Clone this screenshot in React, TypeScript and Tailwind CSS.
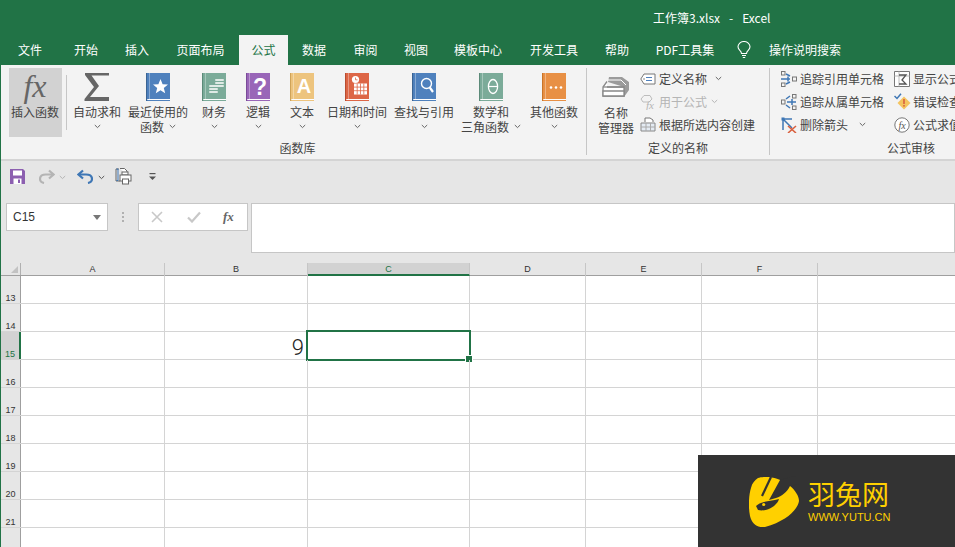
import React from "react";

const Chevron = ({ c = "#666" }: { c?: string }) => (
  <svg width="7" height="5" viewBox="0 0 7 5" className="shrink-0">
    <path d="M0.8 1 L3.5 3.6 L6.2 1" fill="none" stroke={c} strokeWidth="1" />
  </svg>
);

const Book = ({ color, dark, children }: { color: string; dark: string; children?: React.ReactNode }) => (
  <svg width="24" height="28" viewBox="0 0 24 28" className="shrink-0">
    <rect x="0" y="0" width="24" height="26" fill={color} />
    <rect x="1.2" y="26" width="22.8" height="0.9" fill="#fff" />
    <rect x="1" y="27" width="23" height="1" fill={color} />
    <rect x="0" y="0" width="1.2" height="28" fill={dark} />
    <rect x="1.2" y="0" width="2" height="26" fill={color} />
    <rect x="3" y="0" width="0.6" height="26" fill="#fff" opacity="0.55" />
    {children}
  </svg>
);

const icons: Record<string, React.ReactNode> = {
  recent: (
    <Book color="#4f81bd" dark="#3a6392">
      <polygon points="14.5,6 16.6,11.2 22,11.5 17.8,15 19.2,20.3 14.5,17.3 9.8,20.3 11.2,15 7,11.5 12.4,11.2" fill="#fff" />
    </Book>
  ),
  finance: (
    <Book color="#7bab99" dark="#5b8a78">
      <g fill="#dfeae5">
        <rect x="13" y="6" width="9" height="2" rx="1" />
        <rect x="13" y="9" width="9" height="2" rx="1" />
        <rect x="13" y="12" width="9" height="2" rx="1" />
        <rect x="7" y="12" width="9" height="2" rx="1" />
        <rect x="7" y="15" width="9" height="2" rx="1" />
        <rect x="7" y="18" width="9" height="2" rx="1" />
      </g>
    </Book>
  ),
  logic: (
    <Book color="#9966b8" dark="#7a4a98">
      <text x="14" y="22" textAnchor="middle" fontSize="23" fontWeight="700" fill="#fff" fontFamily="Liberation Sans">?</text>
    </Book>
  ),
  text: (
    <Book color="#edc47e" dark="#cfa358">
      <text x="14" y="20" textAnchor="middle" fontSize="20" fontWeight="700" fill="#fff" fontFamily="Liberation Sans">A</text>
    </Book>
  ),
  date: (
    <Book color="#dd6646" dark="#b84c30">
      <circle cx="10.5" cy="6.5" r="3.6" fill="#fff" />
      <path d="M10.5 4.5 V6.8 H12.5" stroke="#dd6646" fill="none" strokeWidth="0.8" />
      <rect x="9" y="10.5" width="13" height="11" fill="#fff" />
      <g stroke="#dd6646" strokeWidth="0.8">
        <path d="M12.2 10.5 V21.5 M15.5 10.5 V21.5 M18.8 10.5 V21.5 M9 14.1 H22 M9 17.7 H22" />
      </g>
    </Book>
  ),
  lookup: (
    <Book color="#4f81bd" dark="#3a6392">
      <circle cx="14.5" cy="10.5" r="5" fill="none" stroke="#fff" strokeWidth="1.4" />
      <path d="M17.8 14.5 L21 19" stroke="#fff" strokeWidth="2.2" />
    </Book>
  ),
  math: (
    <Book color="#7bab99" dark="#5b8a78">
      <ellipse cx="14" cy="13.5" rx="4.6" ry="7" fill="none" stroke="#fff" strokeWidth="1.3" />
      <path d="M9.5 13.5 H18.5" stroke="#fff" strokeWidth="1.2" />
    </Book>
  ),
  other: (
    <Book color="#e89045" dark="#c87428">
      <circle cx="9" cy="14.5" r="1.3" fill="#fff" />
      <circle cx="14" cy="14.5" r="1.3" fill="#fff" />
      <circle cx="19" cy="14.5" r="1.3" fill="#fff" />
    </Book>
  ),
  sigma: (
    <svg width="26" height="28" viewBox="0 0 26 28" className="shrink-0">
      <polygon points="1,0 25,0 25,2.6 7.5,2.6 15,13 6,24 25,24 25,28 0.5,28 0.5,26 10,14 1,2" fill="#666" />
    </svg>
  ),
};

const funcButtons = [
  { cls: "w-[50px] ml-[5px]", icon: "sigma", l1: "自动求和", l2: "" },
  { cls: "w-[62px] ml-[5px]", icon: "recent", l1: "最近使用的", l2: "函数" },
  { cls: "w-[44px] ml-[3px]", icon: "finance", l1: "财务", l2: "" },
  { cls: "w-[44px]", icon: "logic", l1: "逻辑", l2: "" },
  { cls: "w-[44px]", icon: "text", l1: "文本", l2: "" },
  { cls: "w-[62px] ml-[2px]", icon: "date", l1: "日期和时间", l2: "" },
  { cls: "w-[62px] ml-[5px]", icon: "lookup", l1: "查找与引用", l2: "" },
  { cls: "w-[62px] ml-[5px]", icon: "math", l1: "数学和", l2: "三角函数" },
  { cls: "w-[52px] ml-[6px]", icon: "other", l1: "其他函数", l2: "" },
];

const FuncButton = ({ cls, icon, l1, l2 }: { cls: string; icon: string; l1: string; l2: string }) => (
  <div className={`${cls} flex flex-col items-center pt-[5px] shrink-0`}>
    <div className="h-[28px] flex justify-center">{icons[icon]}</div>
    <div className="mt-[3px] leading-[15px] whitespace-nowrap">{l1}</div>
    <div className="leading-[15px] h-[15px] flex items-center gap-[5px] whitespace-nowrap">
      {l2 && <span>{l2}</span>}
      <Chevron />
    </div>
  </div>
);

const Tag = () => (
  <svg width="16" height="12" viewBox="0 0 16 12">
    <path d="M4 1 H15 V11 H4 L0.8 6 Z" fill="#fff" stroke="#777" />
    <path d="M6 4.5 H12 M6 7.5 H12" stroke="#4f81bd" />
    <circle cx="4" cy="6" r="0.8" fill="#777" />
  </svg>
);
const UseIn = () => (
  <svg width="17" height="16" viewBox="0 0 17 16">
    <path d="M1 5 L4 1.5 H10 L12 5 L9 8 H3 Z" fill="none" stroke="#bdbdbd" />
    <text x="6" y="15" fontSize="11" fontStyle="italic" fontFamily="Liberation Serif" fill="#b5b5b5">fx</text>
  </svg>
);
const FromSel = () => (
  <svg width="16" height="15" viewBox="0 0 16 15">
    <path d="M1 6 H15 V14 H1 Z" fill="#e4ebf3" stroke="#888" />
    <path d="M1 10 H15 M6 6 V14 M10.5 6 V14" stroke="#aaa" />
    <path d="M5 5 V1 H10 L13 3 V5" fill="#fff" stroke="#777" />
  </svg>
);
const Manager = () => (
  <svg width="28" height="22" viewBox="0 0 28 22">
    <path d="M7 1 H20 L27 6 V14 L22 21 V11 L6 6 Z" fill="#9b9b9b" />
    <path d="M6 4 H19 L24 9" fill="none" stroke="#fff" strokeWidth="1" />
    <path d="M5 5.5 L1 11 V20 H22 V11 H5" fill="#fff" stroke="#888" strokeWidth="1.3" />
    <path d="M1 11 H22" stroke="#888" strokeWidth="1.3" />
    <path d="M1 15 H22 V20 H1 Z" fill="#fff" stroke="#888" strokeWidth="1.3" />
  </svg>
);
const TraceA = () => (
  <svg width="16" height="16" viewBox="0 0 16 16">
    <rect x="0.5" y="0.5" width="3.5" height="3.5" fill="none" stroke="#777" />
    <rect x="0.5" y="12" width="3.5" height="3.5" fill="none" stroke="#777" />
    <rect x="11.5" y="6" width="4" height="4" fill="none" stroke="#777" />
    <path d="M0 8 H9 M7 5.5 V10.5 M5 3 L9 5 M5 13 L9 11" stroke="#3f77b5" strokeWidth="1.5" />
  </svg>
);
const TraceB = () => (
  <svg width="16" height="16" viewBox="0 0 16 16">
    <rect x="0.5" y="6" width="3.5" height="4" fill="none" stroke="#777" />
    <rect x="11.5" y="0.5" width="3.5" height="3.5" fill="none" stroke="#777" />
    <rect x="11.5" y="12" width="3.5" height="3.5" fill="none" stroke="#777" />
    <path d="M6 8 H15 M11 5 V11 M5 5 L9 2 M5 11 L9 14" stroke="#3f77b5" strokeWidth="1.5" />
  </svg>
);
const RemoveArrows = () => (
  <svg width="16" height="16" viewBox="0 0 16 16">
    <path d="M2 2 V13 M2 2 H11 M2 2 L11 11" stroke="#3f77b5" strokeWidth="1.5" fill="none" />
    <path d="M7 9 L15 16 M15 9 L7 16" stroke="#d9603f" strokeWidth="1.6" />
    <rect x="0.5" y="0.5" width="3" height="3" fill="#3f77b5" />
  </svg>
);
const ShowF = () => (
  <svg width="16" height="16" viewBox="0 0 16 16">
    <path d="M0.5 0.5 H15.5 V15.5 H0.5 Z" fill="#fff" stroke="#777" />
    <path d="M0.5 5 H15.5 M5 0.5 V15.5" stroke="#bbb" />
    <path d="M5 4 H12 L8 9 L12 13 H5" fill="none" stroke="#555" strokeWidth="1.3" />
  </svg>
);
const ErrCheck = () => (
  <svg width="17" height="17" viewBox="0 0 17 17">
    <path d="M0.5 3 L3 5.5 L7 0.8" fill="none" stroke="#3f77b5" strokeWidth="1.5" />
    <polygon points="10,3.5 16.5,10 10,16.5 3.5,10" fill="#f4c45f" />
    <path d="M10 6 V11" stroke="#d9603f" strokeWidth="1.6" />
    <rect x="9.2" y="12" width="1.6" height="1.6" fill="#d9603f" />
  </svg>
);
const EvalF = () => (
  <svg width="16" height="16" viewBox="0 0 16 16">
    <circle cx="8" cy="8" r="7.2" fill="#fff" stroke="#777" />
    <text x="8" y="11.5" textAnchor="middle" fontSize="10" fontStyle="italic" fontFamily="Liberation Serif" fill="#555">fx</text>
  </svg>
);

const Row = ({ children, icon, cls = "" }: { children: React.ReactNode; icon: React.ReactNode; cls?: string }) => (
  <div className={`h-[23px] flex items-center whitespace-nowrap ${cls}`}>
    <div className="w-[19px] flex items-center shrink-0">{icon}</div>
    {children}
  </div>
);

const Group = ({ cls, label, children }: { cls: string; label: string; children: React.ReactNode }) => (
  <div className={`${cls} h-[87px] flex flex-col shrink-0`}>
    <div className="h-[72px] flex">{children}</div>
    <div className="h-[15px] leading-[15px] text-center">{label}</div>
  </div>
);

const tabs = [
  { t: "文件", c: "w-[60px]" },
  { t: "开始", c: "w-[52px]" },
  { t: "插入", c: "w-[50px]" },
  { t: "页面布局", c: "w-[77px]" },
  { t: "公式", c: "w-[49px] bg-[#f3f3f3] text-[#217346]" },
  { t: "数据", c: "w-[52px]" },
  { t: "审阅", c: "w-[51px]" },
  { t: "视图", c: "w-[50px]" },
  { t: "模板中心", c: "w-[74px]" },
  { t: "开发工具", c: "w-[78px]" },
  { t: "帮助", c: "w-[48px]" },
  { t: "PDF工具集", c: "w-[88px]" },
];

const columns = [
  { n: "A", c: "w-[144px]" },
  { n: "B", c: "w-[143px]" },
  { n: "C", c: "w-[162px]" },
  { n: "D", c: "w-[116px]" },
  { n: "E", c: "w-[116px]" },
  { n: "F", c: "w-[116px]" },
];
const rows = [13, 14, 15, 16, 17, 18, 19, 20, 21, 22];

export default function App() {
  return (
    <div className="relative w-[955px] h-[547px] overflow-hidden bg-white text-[12px] text-[#444] [font-family:'Noto_Sans_CJK_SC','Noto_Sans',sans-serif]">
      {/* title */}
      <div className="h-[35px] bg-[#217346] text-white pl-[653px] pt-[9px] leading-[17px] whitespace-nowrap flex">
        <span>工作簿3.xlsx</span>
        <span className="ml-[9px]">-</span>
        <span className="ml-[9px]">Excel</span>
      </div>
      {/* tabs */}
      <div className="h-[30px] bg-[#217346] flex text-white">
        {tabs.map((t) => (
          <div key={t.t} className={`${t.c} h-full flex items-center justify-center shrink-0 whitespace-nowrap`}>{t.t}</div>
        ))}
        <div className="ml-[1px] w-[28px] flex items-center justify-center">
          <svg width="14" height="18" viewBox="0 0 14 18">
            <path d="M4.5 12.5 C4.5 9.5 1 9 1 5.8 A6 5.3 0 0 1 13 5.8 C13 9 9.5 9.5 9.5 12.5 Z" fill="none" stroke="#fff" strokeWidth="1.1" />
            <path d="M5 14.5 H9 M5.8 16.5 H8.2" stroke="#fff" strokeWidth="1.1" />
          </svg>
        </div>
        <div className="ml-[11px] h-full flex items-center whitespace-nowrap">操作说明搜索</div>
      </div>

      {/* below-tabs with green left stripe */}
      <div className="border-l border-[#217346] h-[482px] flex flex-col bg-[#e6e6e6]">
        {/* ribbon */}
        <div className="h-[96px] bg-[#f3f3f3] border-b-2 border-[#d4d4d4] pt-[3px] flex shrink-0 overflow-hidden">
          <Group cls="w-[586px] pl-[8px] border-r border-[#c6c6c6]" label="函数库">
            <div className="w-[53px] h-[69px] bg-[#d2d2d2] flex flex-col items-center pt-[3px] pr-[1px] shrink-0">
              <div className="h-[30px] text-[#666] text-[32px] leading-[30px] italic [font-family:'Liberation_Serif',serif]">fx</div>
              <div className="mt-[3px] leading-[15px] whitespace-nowrap">插入函数</div>
            </div>
            <div className="ml-[4px] mt-[7px] w-px h-[55px] bg-[#c6c6c6] shrink-0" />
            {funcButtons.map((b) => (
              <FuncButton key={b.l1} {...b} />
            ))}
          </Group>
          <Group cls="w-[183px] border-r border-[#c6c6c6]" label="定义的名称">
            <div className="ml-[7px] w-[44px] flex flex-col items-center pt-[8px] shrink-0">
              <Manager />
              <div className="mt-[7px] leading-[15px]">名称</div>
              <div className="leading-[15px] whitespace-nowrap">管理器</div>
            </div>
            <div className="ml-[2px] -mt-[1px] flex flex-col">
              <Row icon={<Tag />}>
                定义名称<span className="ml-[8px]"><Chevron /></span>
              </Row>
              <Row icon={<UseIn />} cls="text-[#b5b5b5]">
                用于公式<span className="ml-[4px]"><Chevron c="#b5b5b5" /></span>
              </Row>
              <Row icon={<FromSel />}>根据所选内容创建</Row>
            </div>
          </Group>
          <Group cls="w-[282px]" label="公式审核">
            <div className="ml-[11px] -mt-[1px] w-[113px] flex flex-col shrink-0">
              <Row icon={<TraceA />}>追踪引用单元格</Row>
              <Row icon={<TraceB />}>追踪从属单元格</Row>
              <Row icon={<RemoveArrows />}>
                删除箭头<span className="ml-[11px]"><Chevron /></span>
              </Row>
            </div>
            <div className="-mt-[1px] flex flex-col">
              <Row icon={<ShowF />}>显示公式</Row>
              <Row icon={<ErrCheck />}>错误检查</Row>
              <Row icon={<EvalF />}>公式求值</Row>
            </div>
          </Group>
        </div>

        {/* quick access */}
        <div className="h-[42px] pt-[8px] flex items-start shrink-0">
          <svg width="15" height="15" viewBox="0 0 15 15" className="ml-[9px]">
            <path d="M0 0 H13 L15 2 V15 H0 Z" fill="#8c5fb0" />
            <rect x="3" y="1.5" width="9" height="5" fill="#fff" />
            <rect x="3.5" y="9.5" width="8" height="5.5" fill="#fff" />
            <rect x="8" y="10.5" width="2" height="3.5" fill="#8c5fb0" />
          </svg>
          <svg width="16" height="15" viewBox="0 0 16 15" className="ml-[14px]">
            <path d="M14 5.5 H7 C3 5.5 1 7.5 1 10 C1 12 2.5 13.5 5 14" fill="none" stroke="#b4b4b4" strokeWidth="2.2" />
            <path d="M10 1.5 L14.5 5.5 L10 9.5" fill="none" stroke="#b4b4b4" strokeWidth="2.2" />
          </svg>
          <span className="ml-[4px] mt-[6px]"><Chevron c="#b4b4b4" /></span>
          <svg width="16" height="15" viewBox="0 0 16 15" className="ml-[11px]">
            <path d="M2 5.5 H9 C13 5.5 15 7.5 15 10 C15 12 13.5 13.5 11 14" fill="none" stroke="#3f77b5" strokeWidth="2.2" />
            <path d="M6 1.5 L1.5 5.5 L6 9.5" fill="none" stroke="#3f77b5" strokeWidth="2.2" />
          </svg>
          <span className="ml-[5px] mt-[6px]"><Chevron c="#555" /></span>
          <svg width="17" height="17" viewBox="0 0 17 17" className="ml-[10px] -mt-[1px]">
            <path d="M4 1 H1 V13 H5" fill="none" stroke="#666" />
            <path d="M1.5 1 H3 V12.5 H1.5" fill="none" stroke="#3f77b5" />
            <path d="M5 0.5 H9.5 L12 3 V7" fill="#fff" stroke="#666" />
            <rect x="7" y="4" width="6" height="3" fill="#fff" stroke="#666" />
            <rect x="5" y="7" width="11" height="6" fill="#fff" stroke="#666" />
            <rect x="7.5" y="11" width="6" height="5" fill="#fff" stroke="#666" />
          </svg>
          <svg width="7" height="8" viewBox="0 0 7 8" className="ml-[17px] mt-[4px]">
            <rect x="0.5" y="0" width="6" height="1.2" fill="#555" />
            <polygon points="0,3.5 7,3.5 3.5,7" fill="#555" />
          </svg>
        </div>

        {/* formula bar */}
        <div className="h-[60px] flex items-start shrink-0">
          <div className="ml-[5px] w-[102px] h-[28px] bg-white border border-[#c6c6c6] flex items-center justify-between pl-[6px] pr-[6px] text-[#333]">
            <span className="[font-family:'Liberation_Sans',sans-serif] text-[12px]">C15</span>
            <svg width="8" height="5" viewBox="0 0 8 5"><polygon points="0,0 8,0 4,5" fill="#777" /></svg>
          </div>
          <div className="ml-[14px] mt-[9px] w-[2px] h-[10px] flex flex-col justify-between">
            <div className="h-[2px] bg-[#b0b0b0]" />
            <div className="h-[2px] bg-[#b0b0b0]" />
            <div className="h-[2px] bg-[#b0b0b0]" />
          </div>
          <div className="ml-[14px] w-[110px] h-[28px] bg-white border border-[#c6c6c6] flex items-center">
            <svg width="12" height="12" viewBox="0 0 12 12" className="ml-[12px]">
              <path d="M1 1 L11 11 M11 1 L1 11" stroke="#c8c8c8" strokeWidth="1.6" />
            </svg>
            <svg width="14" height="12" viewBox="0 0 14 12" className="ml-[24px]">
              <path d="M1 6.5 L5 10.5 L13 1.5" fill="none" stroke="#c8c8c8" strokeWidth="2.2" />
            </svg>
            <span className="ml-[22px] text-[13px] font-bold italic text-[#666] [font-family:'Liberation_Serif',serif]">fx</span>
          </div>
          <div className="ml-[3px] flex-1 h-[50px] bg-white border border-[#c6c6c6]" />
        </div>

        {/* column header */}
        <div className="h-[13px] flex shrink-0 border-b border-[#9f9f9f] [font-family:'Liberation_Sans',sans-serif] text-[9px] leading-[13px]">
          <div className="w-[20px] border-r border-[#b0b0b0] flex items-end justify-end pr-[2px] pb-[2px] shrink-0">
            <svg width="7" height="7" viewBox="0 0 7 7"><polygon points="7,0 7,7 0,7" fill="#c2c2c2" /></svg>
          </div>
          {columns.map((c) => (
            <div
              key={c.n}
              className={`${c.c} shrink-0 text-center border-r border-[#c6c6c6] h-[13px] ${c.n === "C" ? "bg-[#d2d2d2] text-[#217346] border-b-2 border-b-[#217346]" : "text-[#333]"}`}
            >
              {c.n}
            </div>
          ))}
        </div>

        {/* rows */}
        <div className="flex-1 bg-white">
          {rows.map((r) => (
            <div key={r} className="h-[28px] flex border-b border-[#d4d4d4]">
              <div
                className={`w-[20px] shrink-0 flex items-end justify-center text-[9px] leading-[10px] [font-family:'Liberation_Sans',sans-serif] ${r === 15 ? "bg-[#d2d2d2] text-[#217346] border-r-2 border-[#217346]" : "bg-[#e6e6e6] text-[#333] border-r border-[#9f9f9f]"}`}
              >
                {r}
              </div>
              {columns.map((c) => (
                <div key={c.n} className={`${c.c} shrink-0 relative border-r border-[#d4d4d4] flex items-center justify-end pr-[3px]`}>
                  {r === 15 && c.n === "B" && (
                    <span className="text-[#222] text-[22px] leading-[26px] pt-[4px] font-light [font-family:'Roboto',sans-serif]">9</span>
                  )}
                  {r === 15 && c.n === "C" && (
                    <div className="absolute -left-[2px] -top-[2px] -right-[2px] -bottom-[2px] border-2 border-[#217346]">
                      <div className="absolute -right-[3px] -bottom-[3px] w-[6px] h-[6px] bg-[#217346] outline outline-1 outline-white" />
                    </div>
                  )}
                </div>
              ))}
            </div>
          ))}
        </div>
      </div>

      {/* watermark */}
      <div className="absolute right-0 bottom-0 w-[257px] h-[92px] bg-[#333] flex items-center pl-[51px]">
        <svg width="50" height="51" viewBox="0 0 50 51" className="shrink-0">
          <path
            d="M9 2 C15 0 30 0 41 10 C46 14 50 20 50 25 C49 33 38 45 16 51 C8 52 3 48 1 40 C-1 30 0 18 2 12 C3 7 6 4 9 2 Z"
            fill="#ffd000"
          />
          <path d="M31 4 L50 -1 L50 8 L41 10 C38 16 33 20 27 22 L20 24 Z" fill="#333" />
          <path d="M22 1 L13 20" stroke="#333" strokeWidth="2.2" />
          <path d="M7 30 C12 25 22 25 30 23 C28 30 18 36 9 34 Z" fill="#333" />
          <circle cx="14.7" cy="28.5" r="1.6" fill="#ffd000" />
        </svg>
        <div className="ml-[9px] text-[#ffd000] flex flex-col">
          <div className="text-[27px] leading-[30px] whitespace-nowrap">羽兔网</div>
          <div className="text-[11px] leading-[14px] mt-[1px] whitespace-nowrap [font-family:'Liberation_Sans',sans-serif]">WWW.YUTU.CN</div>
        </div>
      </div>
    </div>
  );
}
